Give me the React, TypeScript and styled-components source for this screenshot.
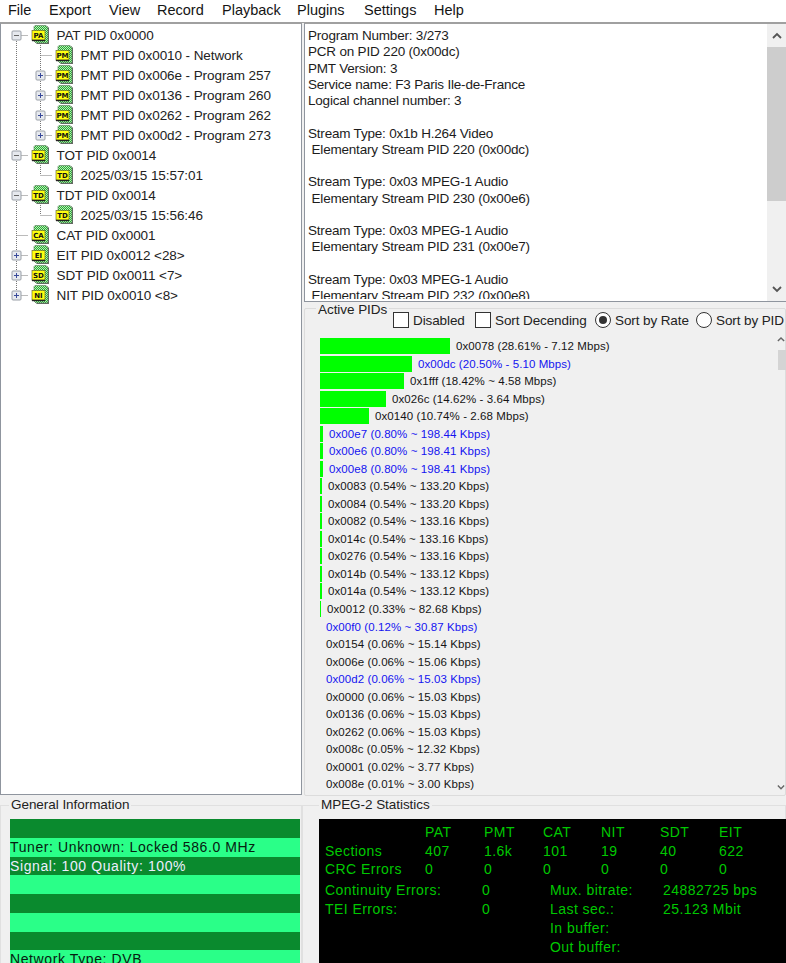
import React from "react";
import styled, { createGlobalStyle } from "styled-components";

const Global = createGlobalStyle`
  html, body { margin: 0; padding: 0; background: #f0f0f0; overflow: hidden; }
  * { box-sizing: border-box; }
  body { font-family: "Liberation Sans", Arial, sans-serif; font-size: 14px; color: #111; }
`;

const Page = styled.div`
  width: 786px; height: 963px; overflow: hidden;
  display: grid;
  grid-template-columns: 302px 484px;
  grid-template-rows: 23px 772px 168px;
  background: #f0f0f0;
`;

const MenuBar = styled.nav`
  grid-column: 1 / 3;
  display: flex; align-items: center;
  padding: 0 0 2px 8px;
  background: #fff;
  border-bottom: 1px solid #a0a0a0;
  font-size: 14.5px;
`;
const MenuItem = styled.span<{ $w: number }>`
  width: ${(p) => p.$w}px;
  color: #151515;
`;

const Tree = styled.div`
  background: #fff;
  border: 1px solid #8f959e;
  border-top-color: #a0a0a0;
  padding-top: 1px;
  overflow: hidden;
`;
const TreeRow = styled.div`
  display: flex; align-items: center; height: 20px; padding-left: 3px;
`;
const Guide = styled.svg`
  flex: none; width: 24px; height: 20px; display: block;
`;
const NodeIcon = styled.svg`
  flex: none; width: 20px; height: 20px; margin: 0 5.5px 0 3px; display: block;
`;
const NodeLabel = styled.span`
  white-space: nowrap; color: #222; font-size: 13.5px; letter-spacing: -0.08px;
`;

const RightTop = styled.div`
  grid-row: 2; grid-column: 2;
  display: grid; grid-template-rows: 279px 493px;
  padding-left: 2px;
`;
const Details = styled.div`
  display: flex; align-items: flex-start; background: #fff;
  border: 1px solid #8f959e; border-right: 0; border-top-color: #a0a0a0;
  overflow: hidden;
`;
const DetailsText = styled.div`
  flex: 1; height: 275px; padding: 4px 0 0 3px;
  font-size: 13.5px; letter-spacing: -0.2px; line-height: 16.25px; white-space: pre; color: #1c1c1c;
  overflow: hidden;
`;
const ScrollBar = styled.div`
  flex: none; width: 19px; height: 100%; background: #f0f0f0;
  display: flex; flex-direction: column; align-items: center;
  justify-content: space-between;
`;
const ScrollArrow = styled.svg`
  flex: none; width: 12px; height: 23px; display: block;
`;
const SmallArrow = styled(ScrollArrow)`
  height: 18px;
`;
const ScrollThumb = styled.div`
  flex: none; width: 100%; height: 154px; background: #cdcdcd;
`;
const ScrollFill = styled.div`
  flex: 1;
`;

const Group = styled.section`
  position: relative; min-height: 0;
`;
const GroupFrame = styled.div<{ $top: number }>`
  position: absolute; inset: ${(p) => p.$top}px 0 -1px 0;
  border: 1px solid #dcdcdc; border-radius: 2px;
`;
const GroupTitle = styled.span<{ $left: number; $top?: number }>`
  position: absolute; top: ${(p) => p.$top ?? 0}px; left: ${(p) => p.$left}px;
  background: #f0f0f0; padding: 0 2px 0 2px;
  font-size: 13.5px; letter-spacing: -0.05px; line-height: 16px; color: #222; white-space: nowrap;
`;

const Options = styled.div`
  position: relative; display: flex; align-items: center;
  height: 20px; margin: 8px 0 0 89px;
  font-size: 13.5px; letter-spacing: -0.1px; color: #222; white-space: nowrap;
`;
const Option = styled.label<{ $w: number }>`
  display: flex; align-items: center; gap: 4px; width: ${(p) => p.$w}px;
`;
const CheckBox = styled.span`
  flex: none; width: 16px; height: 16px; background: #fff; border: 1px solid #333;
`;
const Radio = styled.span<{ $on?: boolean }>`
  flex: none; width: 16px; height: 16px; border-radius: 50%; background: #fff;
  border: 1px solid #333; display: flex; align-items: center; justify-content: center;
  &::after {
    content: ""; width: 8px; height: 8px; border-radius: 50%;
    background: ${(p) => (p.$on ? "#333" : "transparent")};
  }
`;

const PidArea = styled.div`
  position: relative; display: flex; margin-top: 7.5px; height: 457px; padding-left: 16px;
`;
const PidList = styled.div`
  flex: 1; overflow: hidden;
`;
const PidRow = styled.div`
  display: flex; align-items: center; gap: 6px; height: 17.52px;
  font-size: 11.5px; letter-spacing: 0.08px; white-space: nowrap;
`;
const PidBar = styled.span<{ $w: number }>`
  flex: none; height: 16px; width: ${(p) => p.$w}px; background: #00ff00;
`;
const PidText = styled.span<{ $pes: boolean }>`
  color: ${(p) => (p.$pes ? "#1414f0" : "#151515")};
`;
const PidScroll = styled.div`
  flex: none; width: 11px; display: flex; flex-direction: column; align-items: flex-start;
  margin-top: -4px;
`;
const PidThumb = styled.div`
  width: 8px; height: 20px; background: #d4d4d4; margin: -2px 0 0 3px;
`;
const PidFill = styled.div`
  flex: 1;
`;

const Bottom = styled.div`
  grid-row: 3; grid-column: 1;
`;
const BottomRight = styled.div`
  grid-row: 3; grid-column: 2;
`;
const BottomGroup = styled(Group)`
  height: 168px; padding-top: 24px;
`;
const BottomFrame = styled.div`
  position: absolute; inset: 10px 0 0 0; border: 1px solid #e0e0e0; border-bottom: 0;
`;
const Stripes = styled.div`
  position: relative; margin: 0 2px 0 10px; height: 144px; overflow: hidden;
  font-size: 14px; letter-spacing: 0.6px;
`;
const Stripe = styled.div<{ $dark: boolean }>`
  height: 18.75px; line-height: 18px; white-space: nowrap;
  background: ${(p) => (p.$dark ? "#0a8a2e" : "#2aff88")};
  color: ${(p) => (p.$dark ? "#eef" : "#062010")};
`;

const StatsPanel = styled.div`
  position: relative; margin-left: 17px; height: 144px; background: #000;
  color: #00c800; font-size: 14px; letter-spacing: 0.45px; overflow: hidden;
  padding: 4px 0 0 6px;
`;
const StatsTable = styled.div`
  display: grid; grid-template-columns: 100px 59px 59px 58px 59px 59px 50px;
  grid-auto-rows: 18.7px; line-height: 18.7px;
`;
const StatsLower = styled.div`
  display: grid; grid-template-columns: 157px 68px 113px 120px;
  grid-auto-rows: 19px; line-height: 19px; margin-top: 1.5px; white-space: nowrap;
`;

const ICON_LABEL: Record<string, string> = { PAT: "PA", PMT: "PM", TOT: "TD", TDT: "TD", CAT: "CA", EIT: "EI", SDT: "SD", NIT: "NI" };

function TsIcon({ kind }: { kind: string }) {
  const id = "dots-" + kind;
  return (
    <NodeIcon viewBox="0 0 20 20">
      <defs>
        <pattern id={id} width="2" height="2" patternUnits="userSpaceOnUse">
          <rect width="2" height="2" fill="#2aa83c" />
          <rect width="1" height="1" fill="#b8f0b0" />
          <rect x="1" y="1" width="1" height="1" fill="#b8f0b0" />
        </pattern>
      </defs>
      <path d="M5 1H16L18 3V19H6L4 17V15H2V7H4V2Z" fill="#666" />
      <path d="M4 0.5H15L17 2.5V18H5L3 16V1.5Z" fill={`url(#${id})`} stroke="#5a7a5a" strokeWidth="0.6" />
      <rect x="1" y="5.5" width="13" height="10" fill="#ffff10" stroke="#5a5a20" strokeWidth="0.6" />
      <rect x="1" y="14.6" width="13" height="1.6" fill="#222" />
      <text x="7.5" y="13" textAnchor="middle" fontFamily="'DejaVu Sans', sans-serif" fontWeight="700" fontSize="7" fill="#111">
        {ICON_LABEL[kind]}
      </text>
    </NodeIcon>
  );
}

type Sign = "plus" | "minus" | null;
function Connector({ up, down, right, sign }: { up?: boolean; down?: boolean; right?: boolean; sign?: Sign }) {
  const c = 12.5;
  return (
    <Guide viewBox="0 0 24 20">
      {up && <line x1={c} y1="0" x2={c} y2="10" stroke="#777" strokeDasharray="1 1" />}
      {down && <line x1={c} y1="10" x2={c} y2="20" stroke="#777" strokeDasharray="1 1" />}
      {right && <line x1={c} y1="10.5" x2="24" y2="10.5" stroke="#777" strokeDasharray="1 1" />}
      {sign && (
        <>
          <rect x={c - 4.5} y="6" width="9" height="9" rx="1" fill="#e6e9ee" stroke="#9aa0a8" />
          <line x1={c - 2.5} y1="10.5" x2={c + 2.5} y2="10.5" stroke={sign === "plus" ? "#3a4a9a" : "#666"} />
          {sign === "plus" && <line x1={c} y1="8" x2={c} y2="13" stroke="#3a4a9a" />}
        </>
      )}
    </Guide>
  );
}

type Node = { kind: string; text: string; level: 0 | 1; sign?: Sign; up?: boolean; down?: boolean };
const nodes: Node[] = [
  { kind: "PAT", text: "PAT PID 0x0000", level: 0, sign: "minus", down: true },
  { kind: "PMT", text: "PMT PID 0x0010 - Network", level: 1, up: true, down: true },
  { kind: "PMT", text: "PMT PID 0x006e - Program 257", level: 1, sign: "plus", up: true, down: true },
  { kind: "PMT", text: "PMT PID 0x0136 - Program 260", level: 1, sign: "plus", up: true, down: true },
  { kind: "PMT", text: "PMT PID 0x0262 - Program 262", level: 1, sign: "plus", up: true, down: true },
  { kind: "PMT", text: "PMT PID 0x00d2 - Program 273", level: 1, sign: "plus", up: true },
  { kind: "TOT", text: "TOT PID 0x0014", level: 0, sign: "minus", up: true, down: true },
  { kind: "TOT", text: "2025/03/15 15:57:01", level: 1, up: true },
  { kind: "TDT", text: "TDT PID 0x0014", level: 0, sign: "minus", up: true, down: true },
  { kind: "TDT", text: "2025/03/15 15:56:46", level: 1, up: true },
  { kind: "CAT", text: "CAT PID 0x0001", level: 0, up: true, down: true },
  { kind: "EIT", text: "EIT PID 0x0012 <28>", level: 0, sign: "plus", up: true, down: true },
  { kind: "SDT", text: "SDT PID 0x0011 <7>", level: 0, sign: "plus", up: true, down: true },
  { kind: "NIT", text: "NIT PID 0x0010 <8>", level: 0, sign: "plus", up: true },
];

const details = `Program Number: 3/273
PCR on PID 220 (0x00dc)
PMT Version: 3
Service name: F3 Paris Ile-de-France
Logical channel number: 3

Stream Type: 0x1b H.264 Video
 Elementary Stream PID 220 (0x00dc)

Stream Type: 0x03 MPEG-1 Audio
 Elementary Stream PID 230 (0x00e6)

Stream Type: 0x03 MPEG-1 Audio
 Elementary Stream PID 231 (0x00e7)

Stream Type: 0x03 MPEG-1 Audio
 Elementary Stream PID 232 (0x00e8)`;

const pids: [number, string, boolean][] = [
  [130, "0x0078 (28.61% - 7.12 Mbps)", false],
  [92, "0x00dc (20.50% - 5.10 Mbps)", true],
  [84, "0x1fff (18.42% ~ 4.58 Mbps)", false],
  [66, "0x026c (14.62% - 3.64 Mbps)", false],
  [49, "0x0140 (10.74% - 2.68 Mbps)", false],
  [3, "0x00e7 (0.80% ~ 198.44 Kbps)", true],
  [3, "0x00e6 (0.80% ~ 198.41 Kbps)", true],
  [3, "0x00e8 (0.80% ~ 198.41 Kbps)", true],
  [2, "0x0083 (0.54% ~ 133.20 Kbps)", false],
  [2, "0x0084 (0.54% ~ 133.20 Kbps)", false],
  [2, "0x0082 (0.54% ~ 133.16 Kbps)", false],
  [2, "0x014c (0.54% ~ 133.16 Kbps)", false],
  [2, "0x0276 (0.54% ~ 133.16 Kbps)", false],
  [2, "0x014b (0.54% ~ 133.12 Kbps)", false],
  [2, "0x014a (0.54% ~ 133.12 Kbps)", false],
  [1, "0x0012 (0.33% ~ 82.68 Kbps)", false],
  [0, "0x00f0 (0.12% ~ 30.87 Kbps)", true],
  [0, "0x0154 (0.06% ~ 15.14 Kbps)", false],
  [0, "0x006e (0.06% ~ 15.06 Kbps)", false],
  [0, "0x00d2 (0.06% ~ 15.03 Kbps)", true],
  [0, "0x0000 (0.06% ~ 15.03 Kbps)", false],
  [0, "0x0136 (0.06% ~ 15.03 Kbps)", false],
  [0, "0x0262 (0.06% ~ 15.03 Kbps)", false],
  [0, "0x008c (0.05% ~ 12.32 Kbps)", false],
  [0, "0x0001 (0.02% ~ 3.77 Kbps)", false],
  [0, "0x008e (0.01% ~ 3.00 Kbps)", false],
];

const menu: [string, number][] = [
  ["File", 41], ["Export", 60], ["View", 48], ["Record", 65], ["Playback", 75],
  ["Plugins", 67], ["Settings", 70], ["Help", 40],
];

const info = ["", "Tuner: Unknown: Locked 586.0 MHz", "Signal: 100 Quality: 100%", "", "", "", "", "Network Type: DVB"];

const statsRows = [
  ["", "PAT", "PMT", "CAT", "NIT", "SDT", "EIT"],
  ["Sections", "407", "1.6k", "101", "19", "40", "622"],
  ["CRC Errors", "0", "0", "0", "0", "0", "0"],
];
const statsLower = [
  ["Continuity Errors:", "0", "Mux. bitrate:", "24882725 bps"],
  ["TEI Errors:", "0", "Last sec.:", "25.123 Mbit"],
  ["", "", "In buffer:", ""],
  ["", "", "Out buffer:", ""],
];

function Chevron({ up }: { up?: boolean }) {
  return (
    <ScrollArrow viewBox="0 0 12 23">
      <path d={up ? "M2 14L6 10L10 14" : "M2 9L6 13L10 9"} fill="none" stroke="#555" strokeWidth="1.8" />
    </ScrollArrow>
  );
}

export default function App() {
  return (
    <Page>
      <Global />
      <MenuBar>
        {menu.map(([m, w]) => (
          <MenuItem key={m} $w={w}>{m}</MenuItem>
        ))}
      </MenuBar>

      <Tree>
        {nodes.map((n, i) => (
          <TreeRow key={i}>
            {n.level === 1 && <Connector up down />}
            <Connector up={n.up} down={n.down} right sign={n.sign ?? null} />
            <TsIcon kind={n.kind} />
            <NodeLabel>{n.text}</NodeLabel>
          </TreeRow>
        ))}
      </Tree>

      <RightTop>
        <Details>
          <DetailsText>{details}</DetailsText>
          <ScrollBar>
            <Chevron up />
            <ScrollThumb />
            <ScrollFill />
            <Chevron />
          </ScrollBar>
        </Details>
        <Group>
          <GroupFrame $top={6} />
          <GroupTitle $left={12}>Active PIDs</GroupTitle>
          <Options>
            <Option $w={82}><CheckBox />Disabled</Option>
            <Option $w={120}><CheckBox />Sort Decending</Option>
            <Option $w={101}><Radio $on />Sort by Rate</Option>
            <Option $w={88}><Radio />Sort by PID</Option>
          </Options>
          <PidArea>
            <PidList>
              {pids.map(([w, text, pes]) => (
                <PidRow key={text}>
                  <PidBar $w={w} />
                  <PidText $pes={pes}>{text}</PidText>
                </PidRow>
              ))}
            </PidList>
            <PidScroll>
              <SmallArrow viewBox="0 0 12 23">
                <path d="M2 9L6 5L10 9" fill="none" stroke="#666" strokeWidth="1.8" />
              </SmallArrow>
              <PidThumb />
              <PidFill />
              <SmallArrow viewBox="0 0 12 23">
                <path d="M2 11L6 15L10 11" fill="none" stroke="#666" strokeWidth="1.8" />
              </SmallArrow>
            </PidScroll>
          </PidArea>
        </Group>
      </RightTop>

      <Bottom>
        <BottomGroup>
          <BottomFrame />
          <GroupTitle $left={9} $top={2}>General Information</GroupTitle>
          <Stripes>
            {info.map((t, i) => (
              <Stripe key={i} $dark={i === 0 || i === 2 || i === 4 || i === 6}>{t}</Stripe>
            ))}
          </Stripes>
        </BottomGroup>
      </Bottom>

      <BottomRight>
        <BottomGroup>
          <BottomFrame />
          <GroupTitle $left={17} $top={2}>MPEG-2 Statistics</GroupTitle>
          <StatsPanel>
            <StatsTable>
              {statsRows.flatMap((r, a) => r.map((c, b) => <span key={`${a}-${b}`}>{c}</span>))}
            </StatsTable>
            <StatsLower>
              {statsLower.flatMap((r, a) => r.map((c, b) => <span key={`${a}-${b}`}>{c}</span>))}
            </StatsLower>
          </StatsPanel>
        </BottomGroup>
      </BottomRight>
    </Page>
  );
}
